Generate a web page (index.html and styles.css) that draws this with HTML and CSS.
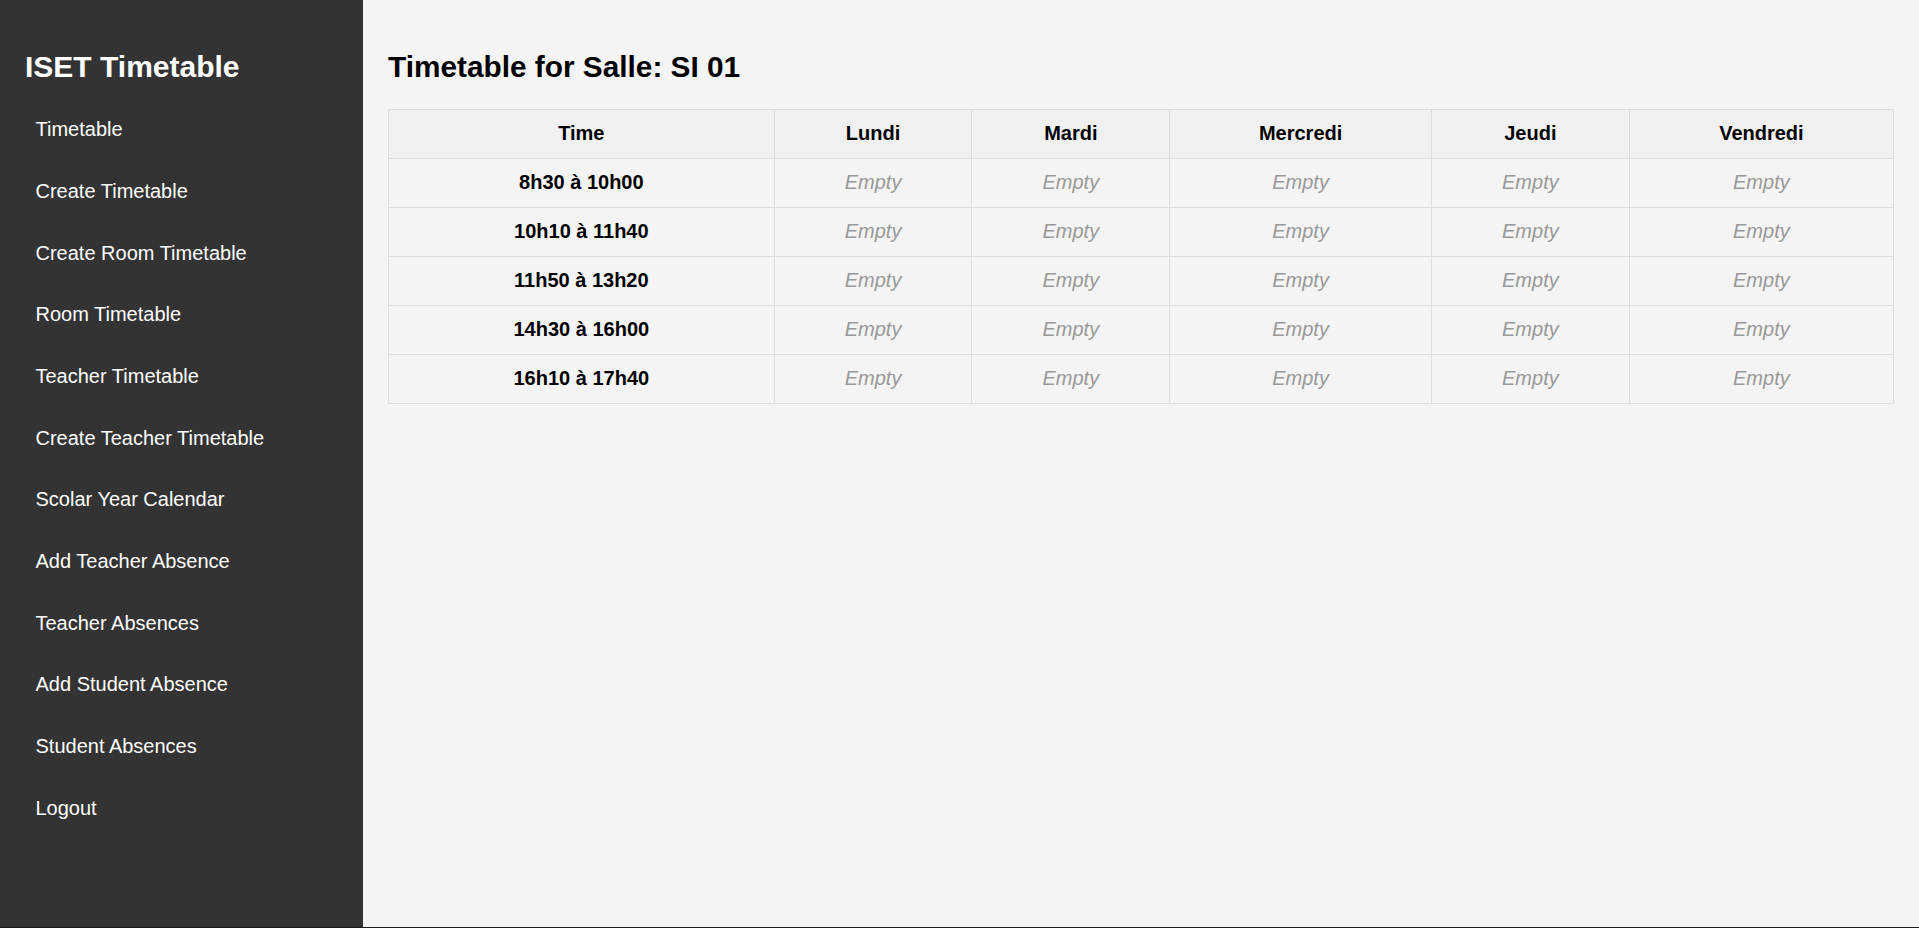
FILE: index.html
```html
<!DOCTYPE html>
<html lang="fr">
<head>
<meta charset="utf-8">
<title>ISET Timetable</title>
<link rel="stylesheet" href="styles.css">
</head>
<body>
<div class="app">
  <nav class="sidebar">
    <h2 class="brand">ISET Timetable</h2>
    <ul class="menu">
      <li><a href="#">Timetable</a></li>
      <li><a href="#">Create Timetable</a></li>
      <li><a href="#">Create Room Timetable</a></li>
      <li><a href="#">Room Timetable</a></li>
      <li><a href="#">Teacher Timetable</a></li>
      <li><a href="#">Create Teacher Timetable</a></li>
      <li><a href="#">Scolar Year Calendar</a></li>
      <li><a href="#">Add Teacher Absence</a></li>
      <li><a href="#">Teacher Absences</a></li>
      <li><a href="#">Add Student Absence</a></li>
      <li><a href="#">Student Absences</a></li>
      <li><a href="#">Logout</a></li>
    </ul>
  </nav>
  <main class="content">
    <h2 class="page-title">Timetable for Salle: SI 01</h2>
    <table class="tt">
      <colgroup>
        <col class="c-time">
        <col class="c-day">
        <col class="c-day">
        <col class="c-wide">
        <col class="c-day">
        <col class="c-wide2">
      </colgroup>
      <thead>
        <tr><th>Time</th><th>Lundi</th><th>Mardi</th><th>Mercredi</th><th>Jeudi</th><th>Vendredi</th></tr>
      </thead>
      <tbody>
        <tr><td class="slot">8h30 à 10h00</td><td class="empty">Empty</td><td class="empty">Empty</td><td class="empty">Empty</td><td class="empty">Empty</td><td class="empty">Empty</td></tr>
        <tr><td class="slot">10h10 à 11h40</td><td class="empty">Empty</td><td class="empty">Empty</td><td class="empty">Empty</td><td class="empty">Empty</td><td class="empty">Empty</td></tr>
        <tr><td class="slot">11h50 à 13h20</td><td class="empty">Empty</td><td class="empty">Empty</td><td class="empty">Empty</td><td class="empty">Empty</td><td class="empty">Empty</td></tr>
        <tr><td class="slot">14h30 à 16h00</td><td class="empty">Empty</td><td class="empty">Empty</td><td class="empty">Empty</td><td class="empty">Empty</td><td class="empty">Empty</td></tr>
        <tr><td class="slot">16h10 à 17h40</td><td class="empty">Empty</td><td class="empty">Empty</td><td class="empty">Empty</td><td class="empty">Empty</td><td class="empty">Empty</td></tr>
      </tbody>
    </table>
  </main>
</div>
</body>
</html>
```

FILE: styles.css
```css
* { box-sizing: border-box; }
html, body {
  margin: 0;
  padding: 0;
  height: 928px;
  overflow: hidden;
}
body {
  font-family: "Liberation Sans", Arial, sans-serif;
  background: #f4f4f4;
  color: #000;
}
.app {
  display: flex;
  height: 928px;
  border-bottom: 1px solid #1e1e1e;
}
.sidebar {
  width: 363px;
  flex: 0 0 363px;
  background: #333333;
  color: #fff;
  padding: 25px;
}
.brand {
  font-size: 30px;
  font-weight: bold;
  margin: 24.9px 0 24.9px;
  line-height: 34.5px;
}
.menu {
  list-style: none;
  margin: 0;
  padding: 0;
}
.menu li { margin: 0; }
.menu a {
  display: block;
  color: #fff;
  text-decoration: none;
  font-size: 20px;
  line-height: 23px;
  padding: 9px 10.5px 29.7px;
}
.content {
  flex: 1;
  padding: 25px;
}
.page-title {
  font-size: 29.8px;
  font-weight: bold;
  margin: 24.5px 0 25px;
  line-height: 34.5px;
}
.tt {
  width: 100%;
  border-collapse: collapse;
  table-layout: fixed;
  font-size: 20px;
}
.c-time { width: 25.62%; }
.c-day { width: 13.14%; }
.c-wide { width: 17.39%; }
.c-wide2 { width: 17.55%; }
.tt th, .tt td {
  border: 1px solid #dddddd;
  padding: 11.7px 8px 13.3px;
  text-align: center;
  line-height: 23px;
}
.tt th {
  background: #f0f0f0;
  font-weight: bold;
}
.tt td.slot { font-weight: bold; }
.tt td.empty {
  color: #999999;
  font-style: italic;
}
```
